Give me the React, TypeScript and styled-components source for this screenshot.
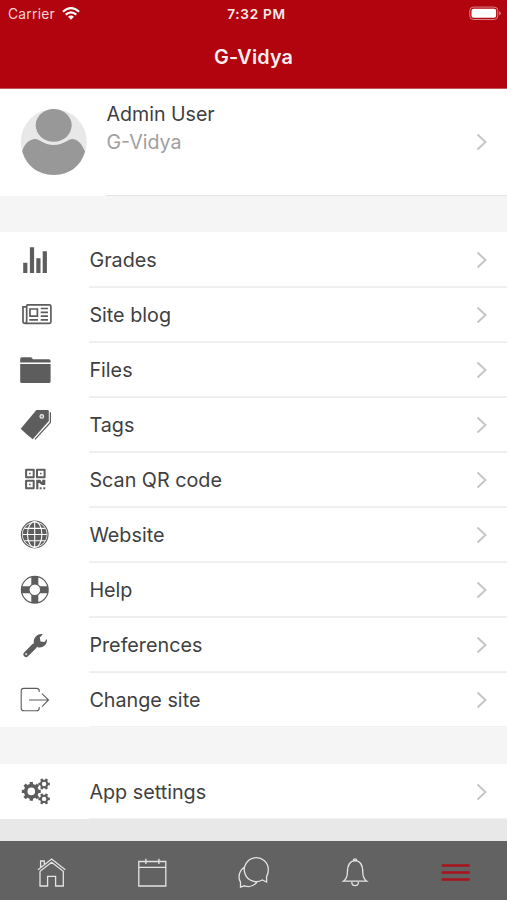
import React from "react";
import styled, { createGlobalStyle } from "styled-components";

const Global = createGlobalStyle`
  * { box-sizing: border-box; }
  body { margin: 0; background: #f5f5f5; font-family: Inter, "Liberation Sans", sans-serif; }
`;
const Screen = styled.div`
  width: 507px; height: 900px; display: flex; flex-direction: column;
  background: #f5f5f5; overflow: hidden;
`;
const Header = styled.header`
  height: 89px; background: #b1040e; color: #fbeaea; flex: none;
  border-bottom: 1px solid #c0525a;
`;
const StatusBar = styled.div`
  height: 28px; padding: 0 5px 0 8px; display: grid;
  grid-template-columns: 1fr auto 1fr; align-items: center;
  font-size: 13.8px; letter-spacing: 0.25px;
`;
const Carrier = styled.div`display: flex; align-items: center; gap: 7px; color: #f6d3d5;`;
const Clock = styled.div`font-size: 13.6px; font-weight: 600; letter-spacing: 0.7px; padding-left: 3px;`;
const Battery = styled.svg`justify-self: end; display: block; width: 34px; height: 16px;`;
const Title = styled.h1`
  margin: 0; height: 58px; line-height: 58px; text-align: center;
  font-size: 19.8px; font-weight: 600; letter-spacing: 0.15px; color: #fdeeee;
`;
const Profile = styled.section`
  height: 107px; flex: none; display: flex; background: #fff; padding-left: 20px;
`;
const Avatar = styled.svg`width: 68px; height: 68px; margin-top: 19px; flex: none;`;
const ProfileBody = styled.div`
  flex: 1; margin-left: 18px; padding: 11px 18px 0 0.5px; display: flex;
  justify-content: space-between; border-bottom: 1px solid #e4e4e4;
`;
const Name = styled.div<{ $muted?: boolean }>`
  height: 28px; line-height: 28px; font-size: 19.6px;
  color: ${(p) => (p.$muted ? "#a0a0a0" : "#3f3f3f")};
`;
const ProfileArrow = styled.div`height: 84px; display: flex; align-items: center;`;
const Gap = styled.div<{ $h: number; $dark?: boolean }>`
  height: ${(p) => p.$h}px; flex: none; background: ${(p) => (p.$dark ? "#e8e8e8" : "#f5f5f5")};
`;
const List = styled.section`flex: none; background: #fff;`;
const Row = styled.div`height: 55px; display: flex; padding-left: 18px;`;
const RowIcon = styled.svg`
  width: 36px; height: 35px; margin: 10px 35px 0 0; flex: none; color: #5d5d5d;
`;
const RowBody = styled.div`
  flex: 1; display: flex; align-items: center; justify-content: space-between;
  padding: 1px 18px 0 0.4px; border-bottom: 1px solid #f1f1f1; box-shadow: 0 1px 0 #eeeeee;
`;
const RowLabel = styled.span`font-size: 19.75px; color: #404040;`;
const Chevron = styled.svg`width: 14px; height: 20px; display: block;`;
const TabBar = styled.nav`
  height: 59px; flex: none; display: grid; grid-template-columns: repeat(5, 1fr);
  justify-items: center; padding-top: 14px; background: #626262;
`;
const TabIcon = styled.svg<{ $active?: boolean }>`
  width: 36px; height: 36px; fill: none; stroke-width: 1.3;
  stroke: ${(p) => (p.$active ? "#a8131c" : "#e4e4e4")};
`;

const Arrow = () => (
  <Chevron viewBox="0 0 14 20" fill="none" stroke="#c6c6c8" strokeWidth="2">
    <path d="M2.5 2.5 10.5 10l-8 7.5" />
  </Chevron>
);

const gearPath = (cx: number, cy: number, outer: number, inner: number, hole: number, teeth: number) => {
  const pts: string[] = [];
  for (let i = 0; i < teeth; i++) {
    const a = (i * 2 * Math.PI) / teeth;
    const s = Math.PI / teeth;
    [[-0.58, inner], [-0.42, outer], [0.42, outer], [0.58, inner]].forEach(([k, r]) =>
      pts.push(`${(cx + r * Math.cos(a + k * s)).toFixed(2)} ${(cy + r * Math.sin(a + k * s)).toFixed(2)}`)
    );
  }
  return `M${pts.join("L")}ZM${cx - hole} ${cy}a${hole} ${hole} 0 1 0 ${hole * 2} 0a${hole} ${hole} 0 1 0 ${-hole * 2} 0Z`;
};

const icons: Record<string, React.ReactNode> = {
  grades: <path fill="currentColor" d="M5.2 20.7h4.2V31H5.2zM11.9 5.3h4.2V31h-4.2zM18.3 16.3h4.2V31h-4.2zM24.7 9.3h4.2V31h-4.2z" />,
  blog: (
    <g fill="none" stroke="currentColor" strokeWidth="1.7">
      <path d="M8.7 7.8H31.3q1.6 0 1.6 1.6v15.4q0 1.6-1.6 1.6H7.2q-2.2 0-2.2-2.2V9.8h3.7M8.7 7.8v16q0 2.4-1.7 2.6" />
      <path d="M12 12h7.4v7.2H12zM22.7 11.5h7.3M22.7 15.4h7.3M22.7 19.2h7.3M22.7 22.9h7.3M11.3 22.9h8.7" />
    </g>
  ),
  files: <path fill="currentColor" d="M2.2 10.6V7q0-1.7 1.7-1.7h8.8q1.4 0 2.2 1.9h16q1.7 0 1.7 1.7v1.7zM2.2 12h30.4v17.4q0 1.6-1.6 1.6H3.8q-1.6 0-1.6-1.6z" />,
  tags: (
    <>
      <path fill="currentColor" d="M18.4 3h11.4q1 0 1 1v10L14.7 32.3q-6.5-5.2-12-10.6z" />
      <circle cx="23.8" cy="9.4" r="1.8" fill="#888" stroke="#eee" strokeWidth="1.2" />
      <path fill="none" stroke="currentColor" strokeWidth="1.2" d="M32.4 5.2v10.2L17 32.4" />
    </>
  ),
  qr: (
    <>
      <path fill="none" stroke="currentColor" strokeWidth="2" strokeLinejoin="round" d="M8.1 7.7h7.6v7.6H8.1zM19 7.7h7.6v7.6H19zM8.1 18.7h7.6v7.6H8.1z" />
      <path fill="currentColor" d="M11.1 10.7h1.6v1.6h-1.6zM22 10.7h1.6v1.6H22zM11.1 21.7h1.6v1.6h-1.6zM18.2 17.8h4l2 2.4v-2.4h3.1v5.2h-3.6l-2.4-2h-.9v6.2h-2.2zM21.7 25.2h1.9v2h-1.9zM25.3 25.2h1.9v2h-1.9z" />
    </>
  ),
  web: (
    <>
      <circle cx="16.7" cy="17.5" r="13.3" fill="none" stroke="currentColor" strokeWidth="1.2" />
      <circle cx="16.7" cy="17.5" r="12" fill="currentColor" />
      <path fill="none" stroke="#fff" strokeWidth="1.1" d="M16.7 5v25M4.8 17.5h24M6.3 11.4h20.8M6.3 23.7h20.8" />
      <ellipse cx="16.7" cy="17.5" rx="7.2" ry="13" fill="none" stroke="#fff" strokeWidth="1.1" />
    </>
  ),
  help: (
    <>
      <path stroke="currentColor" strokeWidth="7" d="M16.8 4.6v26.4M3.6 17.8h26.4" />
      <circle cx="16.8" cy="17.8" r="13.4" fill="none" stroke="currentColor" strokeWidth="1.2" />
      <circle cx="16.8" cy="17.8" r="5.8" fill="#fff" stroke="currentColor" strokeWidth="1.1" />
    </>
  ),
  prefs: (
    <>
      <path fill="none" stroke="currentColor" strokeWidth="5.4" strokeLinecap="round" d="M8.1 27.4 16.4 19" />
      <path fill="currentColor" d="M15.9 16.6q-.9-4.2 1.9-7.2 2.9-2.9 7.1-2.2l-3.1 3.3.7 3.9 3.9.5 2.4-2.9q.6 4.3-2.1 6.6-3 2.6-7 1.6z" />
      <circle cx="8.2" cy="27.2" r="1.1" fill="#ccc" />
    </>
  ),
  change: (
    <path fill="none" stroke="currentColor" strokeWidth="1.1" d="M21.2 10V9q0-2.6-2.6-2.6H5.8Q3.2 6.4 3.2 9v17.2q0 2.6 2.6 2.6h12.8q2.6 0 2.6-2.6V25M11 18h19.3M24 11.7l6.5 6.3-6.5 6.6" />
  ),
  settings: (
    <path fill="currentColor" fillRule="evenodd" d={gearPath(13.3, 17.4, 9.6, 7.5, 3.8, 8) + gearPath(26.1, 10, 5.9, 4.3, 2.2, 6) + gearPath(26.1, 24.9, 5.9, 4.3, 2.2, 6)} />
  ),
};

const MenuRow = ({ icon, label }: { icon: string; label: string }) => (
  <Row>
    <RowIcon viewBox="0 0 36 35">{icons[icon]}</RowIcon>
    <RowBody>
      <RowLabel>{label}</RowLabel>
      <Arrow />
    </RowBody>
  </Row>
);

const menu = [
  ["grades", "Grades"], ["blog", "Site blog"], ["files", "Files"], ["tags", "Tags"],
  ["qr", "Scan QR code"], ["web", "Website"], ["help", "Help"],
  ["prefs", "Preferences"], ["change", "Change site"],
];

export default function App() {
  return (
    <Screen>
      <Global />
      <Header>
        <StatusBar>
          <Carrier>
            Carrier
            <svg width="18" height="14" viewBox="0 0 18 14" fill="none" stroke="#fff" strokeWidth="2.1">
              <path d="M.9 4.7q8.1-7.2 16.2 0M3.7 7.6q5.3-4.6 10.6 0" />
              <path d="M6 9.7q3-2.4 6 0l-3 3z" fill="#fff" stroke="none" />
            </svg>
          </Carrier>
          <Clock>7:32 PM</Clock>
          <Battery viewBox="0 0 34 16">
            <rect x="1.8" y="1.1" width="28" height="12.4" rx="3.6" fill="none" stroke="#dc8588" />
            <rect x="3.5" y="2.8" width="24.6" height="9" rx="2" fill="#fff" />
            <path d="M31.2 5.3q1.5.6 1.5 2t-1.5 2z" fill="#dc8588" />
          </Battery>
        </StatusBar>
        <Title>G-Vidya</Title>
      </Header>
      <Profile>
        <Avatar viewBox="0 0 68 68">
          <circle cx="33.8" cy="34" r="33" fill="#e8e8e8" />
          <path d="M2.2 43.5C4 36 9 31.6 14.5 31q3-.2 5.5 1.8 13.5 8.4 27.5 0 2.5-2 5.5-1.8 7 .8 12.1 12.5Q58 66.3 33.8 67 9.5 66.3 2.2 43.5z" fill="#989898" />
          <ellipse cx="33.7" cy="17.3" rx="18" ry="16.4" fill="#989898" />
        </Avatar>
        <ProfileBody>
          <div>
            <Name>Admin User</Name>
            <Name $muted>G-Vidya</Name>
          </div>
          <ProfileArrow><Arrow /></ProfileArrow>
        </ProfileBody>
      </Profile>
      <Gap $h={36} />
      <List>
        {menu.map(([icon, label]) => <MenuRow key={icon} icon={icon} label={label} />)}
      </List>
      <Gap $h={37} />
      <List>
        <MenuRow icon="settings" label="App settings" />
      </List>
      <Gap $h={22} $dark />
      <TabBar>
        <TabIcon viewBox="0 0 36 36">
          <path d="M5 14.7 18.6 4l13.7 10.7M7 16.3V31h7.6V21.3h8V31h7.7V16.3L18.6 7.2 7 16.3M7.6 12V6h3.7v3" />
        </TabIcon>
        <TabIcon viewBox="0 0 36 36">
          <path d="M4.8 6.5h27V31h-27zM4.8 12.3h27M11.9 3.7V9M24.9 3.7V9" />
        </TabIcon>
        <TabIcon viewBox="0 0 36 36">
          <path d="M31.6 27v-5.5q1.7-3 1.7-6.8A12 12 0 1 0 27.3 25zM9.5 12Q4 16 4 22q0 2.6 1.5 5.1V32l3.9-1.2q7.6 2.6 12.6-3.8" />
        </TabIcon>
        <TabIcon viewBox="0 0 36 36">
          <path d="M6.3 26.2h23.5q-4-2.8-4-8.7 0-11.6-7.7-11.9-7.7.3-7.7 11.9 0 5.9-4.1 8.7zM16.5 5.4q0-1.5 1.6-1.5t1.6 1.5M14.8 27q0 3.7 3.3 3.7t3.3-3.7" />
        </TabIcon>
        <TabIcon viewBox="0 0 36 36" $active>
          <path d="M3.7 10.4h28M3.7 17.4h28M3.7 24.4h28" strokeWidth="2.5" />
        </TabIcon>
      </TabBar>
    </Screen>
  );
}
